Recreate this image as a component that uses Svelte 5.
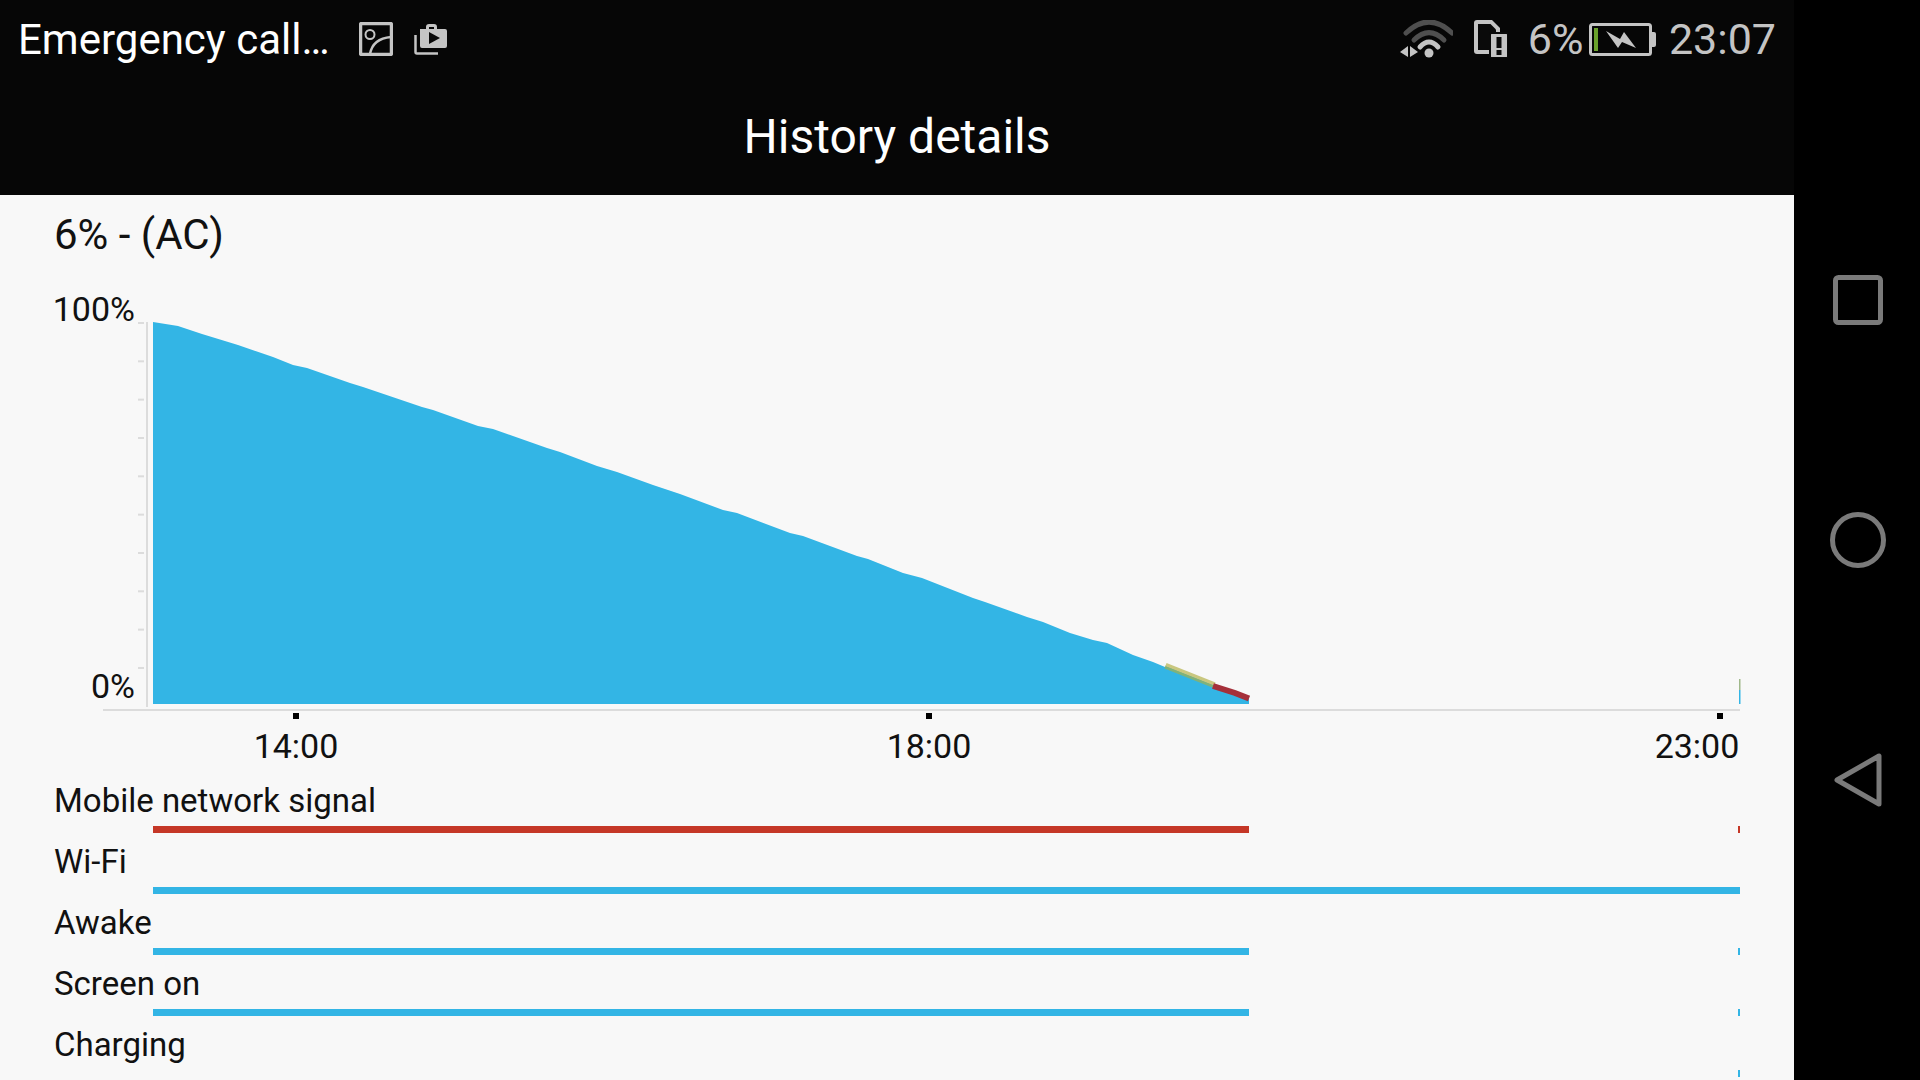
<script>
	const outline = [
		[153, 322], [178, 326], [202, 334], [238, 345], [273, 357], [293, 365], [307, 368], [350, 383],
		[363, 387], [422, 407], [433, 410], [478, 426], [493, 429], [547, 448], [560, 452], [597, 466],
		[617, 472], [653, 485], [680, 494], [723, 510], [737, 513], [790, 533], [803, 536], [857, 556],
		[868, 559], [903, 573], [922, 578], [973, 598], [985, 602], [1027, 617], [1043, 622], [1070, 633],
		[1093, 640], [1107, 643], [1133, 655], [1153, 662], [1165, 667], [1213, 686]
	];
	const area = [...outline, [1249, 699], [1249, 704], [153, 704]].map((p) => p.join(',')).join(' ');
	const yTicks = Array.from({ length: 10 }, (_, i) => 323 + i * 38.33);
	const xLabels = [
		{ x: 296, tick: 296, text: '14:00' },
		{ x: 929, tick: 929, text: '18:00' },
		{ x: 1697, tick: 1720, text: '23:00' }
	];
	const rows = [
		{ label: 'Mobile network signal', color: '#c53727', width: 1096, tail: true },
		{ label: 'Wi-Fi', color: '#33b5e5', width: 1587, tail: false },
		{ label: 'Awake', color: '#33b5e5', width: 1096, tail: true },
		{ label: 'Screen on', color: '#33b5e5', width: 1096, tail: true },
		{ label: 'Charging', color: 'transparent', width: 0, tail: true, tailColor: '#33b5e5' }
	];
</script>

<div class="phone">
	<main>
		<header>
			<div class="status">
				<span class="carrier">Emergency call…</span>
				<svg class="ic-image" width="34" height="34" viewBox="0 0 34 34" fill="none" stroke="#c4c4c4">
					<rect x="1.500" y="1.500" width="31" height="31" rx="1.500" stroke-width="3.500" />
					<circle cx="11" cy="12.500" r="4.500" stroke-width="2" />
					<path d="M11 32C13 21 20 16 32 15" stroke-width="2.500" />
				</svg>
				<svg class="ic-bag" width="33" height="31" viewBox="0 0 33 31" fill="#c4c4c4">
					<path d="M6 5H12V3Q12 0 15 0H20Q23 0 23 3V5H31Q33 5 33 7V22Q33 24 31 24H8Q6 24 6 22ZM15 5H20V3H15Z" fill-rule="evenodd" />
					<path d="M15 8V20L26 14Z" fill="#0a0a0a" />
					<path d="M1.500 11V28Q1.500 29.500 3 29.500H24" fill="none" stroke="#c4c4c4" stroke-width="2.500" />
				</svg>
				<span class="spacer"></span>
				<svg class="ic-wifi" width="53" height="38" viewBox="0 0 53 38" fill="none" stroke-linecap="round">
					<path d="M6 13Q29 -9 52 13" stroke="#4f4f4f" stroke-width="5" />
					<path d="M14 20Q29 5 44 20" stroke="#4f4f4f" stroke-width="5" />
					<path d="M20 27Q29 17 38 27" stroke="#c4c4c4" stroke-width="5" />
					<circle cx="29" cy="33" r="4.500" fill="#c4c4c4" />
					<path d="M0 32L8 26V37ZM10 26L18 32L10 37Z" fill="#c4c4c4" />
				</svg>
				<svg class="ic-sim" width="34" height="38" viewBox="0 0 34 38" fill="#c4c4c4">
					<path d="M3 0H18L26 8V34H3Q0 34 0 31V3Q0 0 3 0Z" />
					<path d="M4 4H16.500L22 9.500V30H4Z" fill="#0a0a0a" />
					<rect x="16" y="13" width="18" height="25" rx="1.500" stroke="#0a0a0a" stroke-width="2" />
					<rect x="22.500" y="17" width="5" height="11" fill="#0a0a0a" />
					<rect x="22.500" y="30" width="5" height="5" fill="#0a0a0a" />
				</svg>
				<span class="level">6%</span>
				<svg class="ic-battery" width="67" height="33" viewBox="0 0 67 33" fill="none">
					<rect x="1.500" y="1.500" width="60" height="30" rx="2" stroke="#c4c4c4" stroke-width="3" />
					<path d="M63 9H65Q67 9 67 11V22Q67 24 65 24H63Z" fill="#c4c4c4" />
					<rect x="5" y="5" width="4" height="23" fill="#6aa12c" />
					<path d="M17 8L31 16L35 9L47 25L33 19L29 25Z" fill="#c4c4c4" />
				</svg>
				<span class="clock">23:07</span>
			</div>
			<h1>History details</h1>
		</header>
		<section class="content">
			<p class="charge">6% - (AC)</p>
			<svg class="chart" width="1794" height="480" viewBox="0 290 1794 480">
				<text x="135" y="321" text-anchor="end">100%</text>
				<text x="135" y="698" text-anchor="end">0%</text>
				<rect x="146" y="322" width="2" height="385" fill="#dcdcdc" />
				{#each yTicks as y}
					<rect x="138" y={y - 1} width="6" height="2" fill="#dcdcdc" />
				{/each}
				<polygon points={area} fill="#33b5e5" />
				<path d="M1165 667L1214 686.500" stroke="#7fb27c" stroke-width="3" fill="none" />
				<path d="M1166 664.500L1215 684" stroke="#c9c77f" stroke-width="3" fill="none" />
				<path d="M1213 686L1235 693L1249 698.500" stroke="#a5303a" stroke-width="6" fill="none" />
				<rect x="1739" y="690" width="1.500" height="14" fill="#33b5e5" />
				<rect x="1739" y="679" width="1.500" height="11" fill="#9fb88a" />
				<rect x="103" y="709" width="1637" height="2" fill="#dcdcdc" />
				{#each xLabels as l}
					<rect x={l.tick - 3} y="713" width="6" height="6" fill="#000" />
					<text x={l.x} y="758" text-anchor="middle">{l.text}</text>
				{/each}
			</svg>
			<ul class="rows">
				{#each rows as row}
					<li>
						<span class="label">{row.label}</span>
						<div class="track">
							<i class="bar" style="width: {row.width}px; background: {row.color}"></i>
							{#if row.tail}
								<i class="tail" style="background: {row.tailColor ?? row.color}"></i>
							{/if}
						</div>
					</li>
				{/each}
			</ul>
		</section>
	</main>
	<nav>
		<svg width="50" height="50" viewBox="0 0 50 50" fill="none">
			<rect x="2.500" y="2.500" width="45" height="45" rx="3" stroke="#7a7a7a" stroke-width="5" />
		</svg>
		<svg class="home" width="56" height="56" viewBox="0 0 56 56" fill="none">
			<circle cx="28" cy="28" r="25.500" stroke="#7a7a7a" stroke-width="5" />
		</svg>
		<svg width="48" height="54" viewBox="0 0 48 54" fill="none">
			<path d="M3 27L45 3V51Z" stroke="#7a7a7a" stroke-width="5" stroke-linejoin="round" />
		</svg>
	</nav>
</div>

<style>
	:global(body) {
		background: #000;
	}

	.phone {
		display: flex;
		width: 1920px;
		height: 1080px;
		overflow: hidden;
		font-family: Roboto, sans-serif;
	}

	main {
		width: 1794px;
		display: flex;
		flex-direction: column;
	}

	header {
		height: 195px;
		flex-shrink: 0;
		background: #060606;
	}

	.status {
		display: flex;
		align-items: center;
		height: 78px;
		padding: 0 18px;
		font-size: 43px;
	}

	.carrier {
		color: #fff;
		font-size: 42px;
		margin-right: 29px;
	}

	.ic-bag {
		margin-left: 21px;
	}

	.spacer {
		flex: 1;
	}

	.ic-sim {
		margin-left: 21px;
	}

	.level,
	.clock {
		color: #c4c4c4;
	}

	.level {
		margin-left: 19.500px;
	}

	.ic-battery {
		margin-left: 6px;
	}

	.clock {
		margin-left: 12.500px;
	}

	h1 {
		margin: 0;
		color: #fff;
		font-size: 48px;
		font-weight: 400;
		line-height: 117px;
		text-align: center;
		height: 117px;
	}

	.content {
		flex: 1;
		background: #f8f8f8;
		min-height: 0;
	}

	.charge {
		margin: 0;
		padding: 15px 0 0 54px;
		height: 79px;
		box-sizing: border-box;
		font-size: 42px;
		line-height: 50px;
		color: #111;
	}

	.chart {
		display: block;
		margin-top: 16px;
	}

	.chart text {
		font-size: 34px;
		fill: #111;
	}

	.rows {
		list-style: none;
		margin: 8px 0 0;
		padding: 0;
	}

	li {
		height: 61px;
	}

	.label {
		display: block;
		padding-left: 54px;
		font-size: 33px;
		line-height: 46px;
		color: #111;
	}

	.track {
		position: relative;
		height: 7px;
		margin: 2px 0 0 153px;
		width: 1587px;
		display: flex;
	}

	.bar {
		display: block;
		height: 7px;
	}

	.tail {
		position: absolute;
		right: 0;
		top: 0;
		width: 2px;
		height: 7px;
	}

	nav {
		width: 126px;
		background: #000;
		display: flex;
		flex-direction: column;
		align-items: center;
		padding: 275px 0 0 2px;
		gap: 186px;
		box-sizing: border-box;
	}

	.home {
		margin: 1px 0 -1px;
	}
</style>
